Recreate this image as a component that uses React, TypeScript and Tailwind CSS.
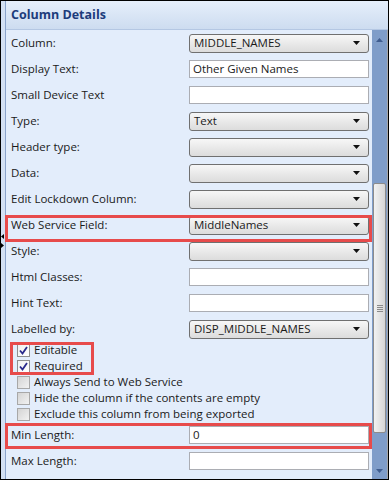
import React from "react";

const font = { fontFamily: '"Open Sans", "Noto Sans", sans-serif' };

function Arrow() {
  return (
    <svg width="7" height="4" viewBox="0 0 7 4" className="shrink-0">
      <path d="M0 0 H7 L3.5 4 Z" fill="#111" />
    </svg>
  );
}

function Select({ value }: { value?: string }) {
  return (
    <div className="w-[180px] h-[19px] rounded-[3px] border border-[#707070] bg-linear-to-b from-[#f7f7f7] to-[#dcdcdc] flex items-center justify-between pl-[4px] pr-[8px]">
      <span className="text-[11.5px] leading-none text-[#1a1a1a]">{value}</span>
      <Arrow />
    </div>
  );
}

function TextBox({ value }: { value?: string }) {
  return (
    <div className="w-[180px] h-[18px] border border-[#abadb3] bg-white flex items-center pl-[3px]">
      <span className="text-[11.5px] leading-none text-[#1a1a1a]">{value}</span>
    </div>
  );
}

function Row({
  label,
  children,
  boxed,
}: {
  label: string;
  children: React.ReactNode;
  boxed?: "web" | "min";
}) {
  return (
    <div className="relative h-[26px] flex items-center">
      <div className="w-[178px] text-[11.5px] text-[#1a1a1a]">{label}</div>
      {children}
      {boxed === "web" && (
        <div className="absolute left-[-6px] right-[-3px] top-[3px] h-[27px] border-[3px] border-[#e74b4b]" />
      )}
      {boxed === "min" && (
        <div className="absolute left-[-6px] right-[-3px] top-[1px] h-[26px] border-[3px] border-[#e74b4b]" />
      )}
    </div>
  );
}

function Check({ label, checked }: { label: string; checked?: boolean }) {
  return (
    <div className="h-[16px] flex items-center pl-[6px] gap-[4px]">
      <div
        className={
          checked
            ? "w-[13px] h-[13px] border border-[#8f8f8f] bg-linear-to-br from-[#f0f0f0] to-white flex items-center justify-center"
            : "w-[13px] h-[13px] border border-[#a8a8a8] bg-linear-to-br from-[#d4d4d4] to-[#f2f2f2]"
        }
      >
        {checked && (
          <svg width="9" height="9" viewBox="0 0 9 9">
            <path d="M1 4.5 L3.5 7.5 L8 1" fill="none" stroke="#2a2a8c" strokeWidth="1.8" />
          </svg>
        )}
      </div>
      <span className="text-[11.5px] text-[#1a1a1a] whitespace-nowrap">{label}</span>
    </div>
  );
}

export default function App() {
  return (
    <div
      className="relative w-[389px] h-[480px] border border-black flex bg-[#e3edfb] overflow-hidden"
      style={font}
    >
      {/* left splitter strip */}
      <div className="w-[4px] bg-[#d3e0f3]" />
      <div className="w-px bg-[#8aa3cb]" />
      <div className="absolute left-0 top-[233px] flex flex-col gap-[4px]">
        <svg width="4" height="5" viewBox="0 0 4 5">
          <path d="M3 0 V5 L0 2.5 Z" fill="#000" />
        </svg>
        <svg width="4" height="5" viewBox="0 0 4 5">
          <path d="M0 0 V5 L3 2.5 Z" fill="#000" />
        </svg>
      </div>

      <div className="flex-1 flex flex-col min-w-0">
        {/* header */}
        <div className="h-[29px] shrink-0 flex items-center pl-[5px] bg-linear-to-b from-[#e6effb] to-[#cddcf0] border-b border-[#b4c7e3]">
          <span className="text-[12.5px] font-bold text-[#1d3c7c]">Column Details</span>
        </div>

        <div className="flex-1 flex min-h-0">
          {/* form */}
          <div className="flex-1 pl-[5px] pr-[3px]">
            <Row label="Column:">
              <Select value="MIDDLE_NAMES" />
            </Row>
            <Row label="Display Text:">
              <TextBox value="Other Given Names" />
            </Row>
            <Row label="Small Device Text">
              <TextBox />
            </Row>
            <Row label="Type:">
              <Select value="Text" />
            </Row>
            <Row label="Header type:">
              <Select />
            </Row>
            <Row label="Data:">
              <Select />
            </Row>
            <Row label="Edit Lockdown Column:">
              <Select />
            </Row>
            <Row label="Web Service Field:" boxed="web">
              <Select value="MiddleNames" />
            </Row>
            <Row label="Style:">
              <Select />
            </Row>
            <Row label="Html Classes:">
              <TextBox />
            </Row>
            <Row label="Hint Text:">
              <TextBox />
            </Row>
            <Row label="Labelled by:">
              <Select value="DISP_MIDDLE_NAMES" />
            </Row>

            <div className="relative">
              <Check label="Editable" checked />
              <Check label="Required" checked />
              <div className="absolute left-[-1px] top-0 w-[84px] h-[33px] border-[3px] border-[#e74b4b]" />
            </div>
            <Check label="Always Send to Web Service" />
            <Check label="Hide the column if the contents are empty" />
            <Check label="Exclude this column from being exported" />

            <Row label="Min Length:" boxed="min">
              <TextBox value="0" />
            </Row>
            <Row label="Max Length:">
              <TextBox />
            </Row>
          </div>

          {/* scrollbar */}
          <div className="w-[15px] shrink-0 flex flex-col bg-[#7f9dc9]">
            <div className="h-[153px] flex justify-center pt-[8px]">
              <svg width="7" height="4" viewBox="0 0 7 4">
                <path d="M0 4 H7 L3.5 0 Z" fill="#3f5d8f" />
              </svg>
            </div>
            <div className="h-[250px] mx-px rounded-[2px] border border-[#8c8c8c] bg-linear-to-r from-[#f2f2f2] to-[#d6d6d6] flex items-center justify-center">
              <div className="flex flex-col gap-[1px]">
                <div className="w-[6px] h-px bg-[#8a8a8a]" />
                <div className="w-[6px] h-px bg-[#8a8a8a]" />
                <div className="w-[6px] h-px bg-[#8a8a8a]" />
                <div className="w-[6px] h-px bg-[#8a8a8a]" />
              </div>
            </div>
            <div className="flex-1 flex items-end justify-center pb-[6px]">
              <svg width="7" height="4" viewBox="0 0 7 4">
                <path d="M0 0 H7 L3.5 4 Z" fill="#3f5d8f" />
              </svg>
            </div>
          </div>
          <div className="w-px bg-[#a6a6a6]" />
        </div>
      </div>
    </div>
  );
}
